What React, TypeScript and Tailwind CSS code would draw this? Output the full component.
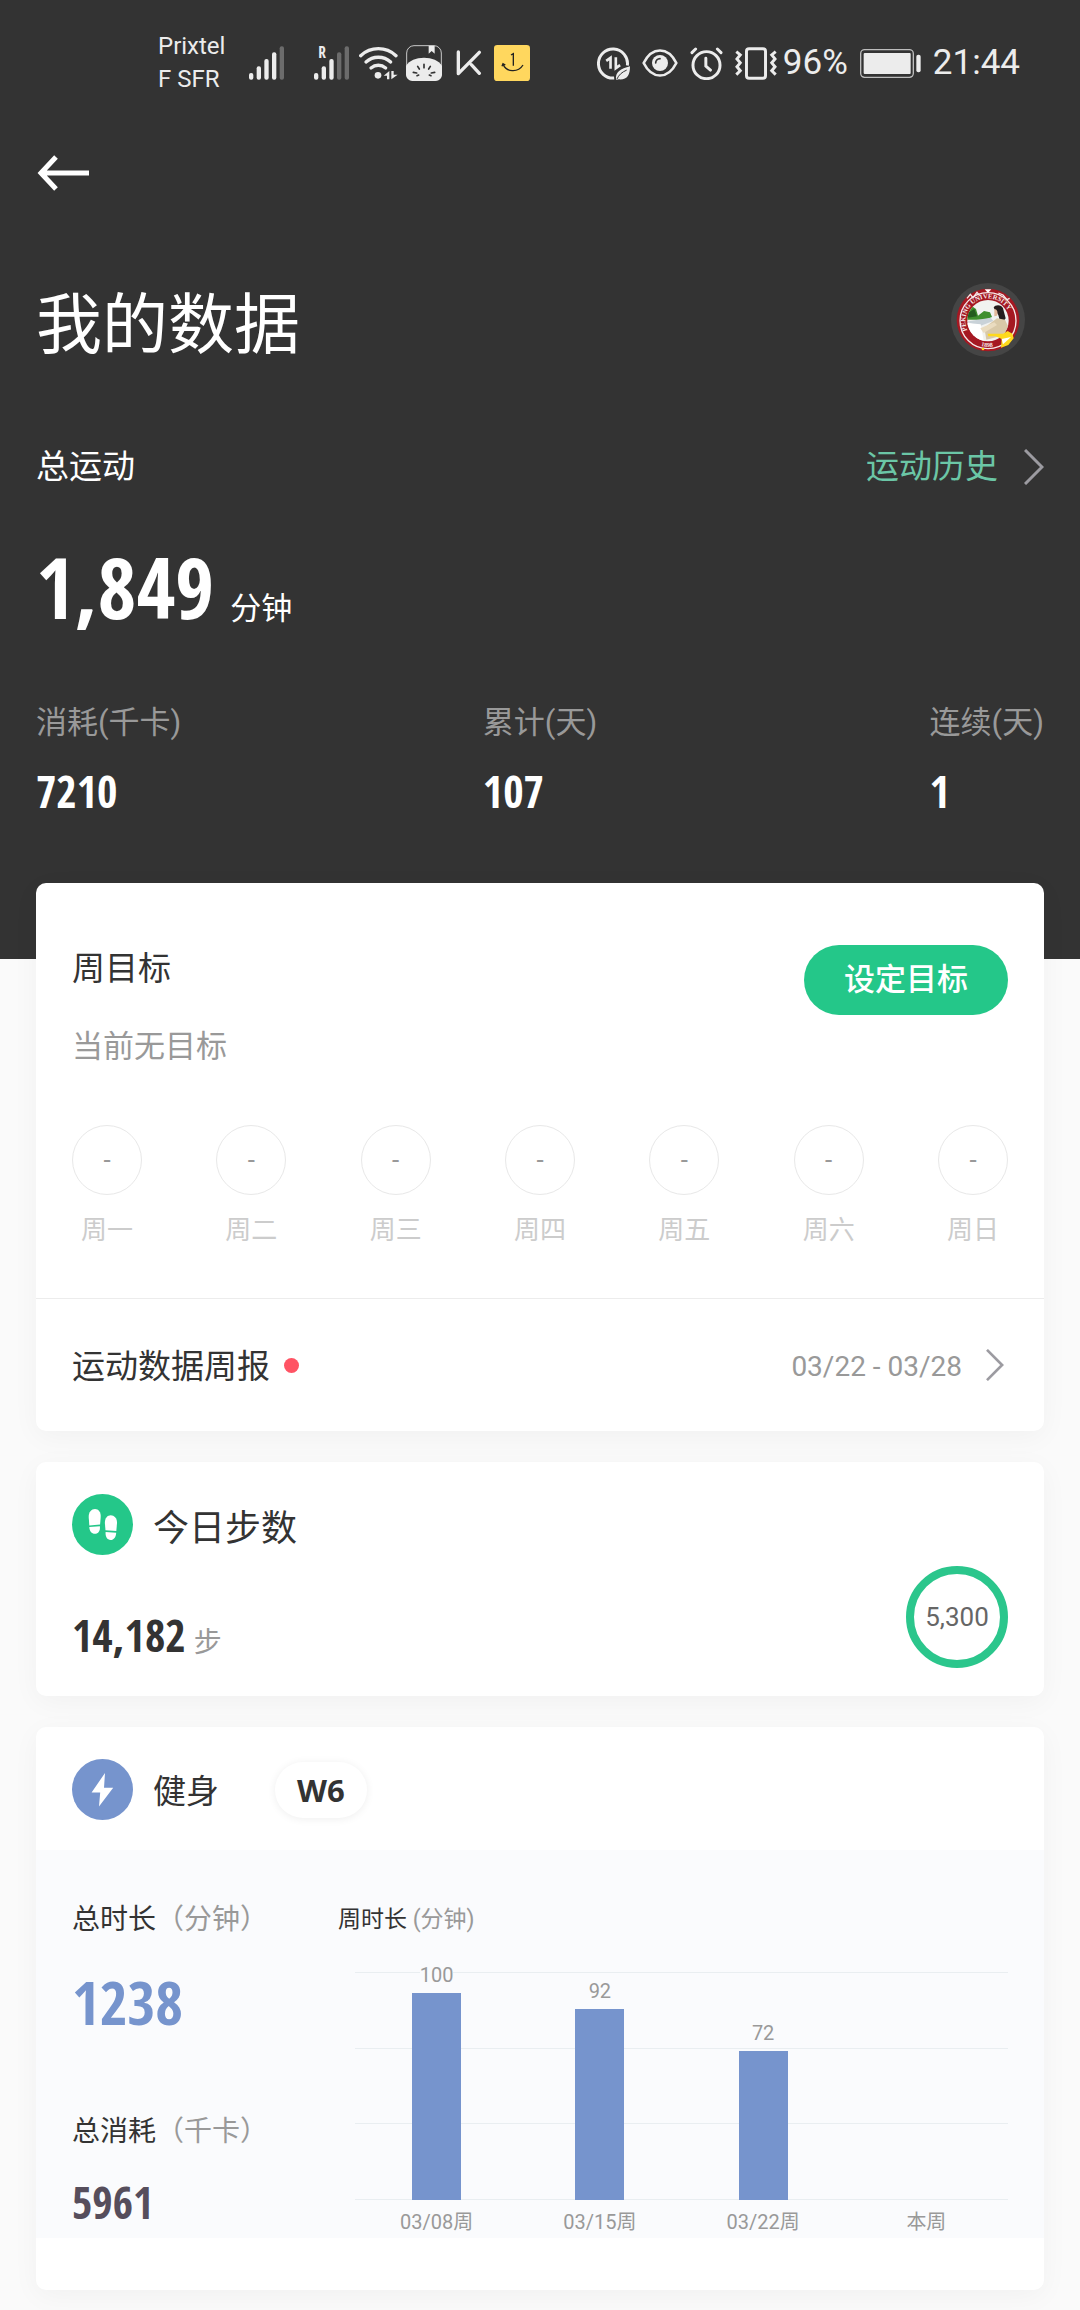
import type { ReactNode } from "react";

const WEEK_DAYS = ["周一", "周二", "周三", "周四", "周五", "周六", "周日"];

const TOTALS = [
  { label: "消耗(千卡)", value: "7210", className: "flex flex-1 flex-col items-start" },
  { label: "累计(天)", value: "107", className: "" },
  { label: "连续(天)", value: "1", className: "flex flex-1 flex-col items-end" },
];

const WEEKLY_MINUTES = [
  { label: "03/08周", minutes: 100 },
  { label: "03/15周", minutes: 92 },
  { label: "03/22周", minutes: 72 },
  { label: "本周", minutes: 0 },
];

const AXIS_MAX = 110;

function SignalIcon({ level, roaming = false }: { level: number; roaming?: boolean }) {
  const tops = [80, 60, 38, 18, 0];
  return (
    <svg width="35" height="34" viewBox="0 0 105 100" className="overflow-visible" aria-hidden="true">
      {tops.map((top, i) => (
        <rect
          key={top}
          x={i * 23}
          y={top}
          width="13"
          height={100 - top}
          rx="6"
          fill={i < level ? "#ececec" : "#6c6c6c"}
        />
      ))}
      {roaming && (
        <text x="13" y="36" fontSize="46" fontWeight="700" fontFamily="Open Sans Condensed, Roboto Condensed, sans-serif" fill="#ececec">
          R
        </text>
      )}
    </svg>
  );
}

function WifiIcon() {
  return (
    <svg width="39" height="34" viewBox="0 0 117 100" fill="none" stroke="#ececec" strokeLinecap="round" aria-hidden="true">
      <path d="M5 28C35 0 81 0 111 28" strokeWidth="10" />
      <path d="M21 47C42 28 74 28 95 47" strokeWidth="10" />
      <path d="M36 65C49 54 67 54 80 65" strokeWidth="10" />
      <circle cx="57" cy="87" r="10" fill="#ececec" stroke="none" />
      <path d="M91 74v25h-7V88H74zM97 99V74h7v11h12z" fill="#ececec" stroke="none" />
    </svg>
  );
}

function MelonIcon() {
  return (
    <svg width="36" height="36" viewBox="0 0 108 108" fill="none" aria-hidden="true">
      <rect x="2" y="2" width="104" height="104" rx="22" stroke="#c8c8c8" strokeWidth="3" />
      <path d="M0 62C10 46 30 38 54 38s44 8 54 24v26c0 12-8 20-20 20H20C8 108 0 100 0 88z" fill="#ececec" />
      <path d="M68 2h18v24l-9-8-9 8z" fill="#ececec" />
      <path
        d="M54 58v10M35 64l5 8M73 64l-5 8M22 82l10 2M86 82l-10 2M38 90l-5 2M70 90l5 2"
        stroke="#333"
        strokeWidth="5"
        strokeLinecap="round"
      />
    </svg>
  );
}

function KeepIcon() {
  return (
    <svg width="26" height="26" viewBox="0 0 78 78" fill="none" stroke="#ececec" strokeWidth="10" strokeLinecap="round" aria-hidden="true">
      <path d="M7 6v65L70 7M46 44l24 26" strokeLinejoin="round" />
    </svg>
  );
}

function AnchorAppIcon() {
  return (
    <svg width="36" height="36" viewBox="0 0 108 108" fill="none" stroke="#222" strokeWidth="4" aria-hidden="true">
      <rect width="108" height="108" rx="10" fill="#ffd75e" stroke="none" />
      <path d="M51 30l7-4v36M27 57C36 82 72 84 87 60M24 64l3-8 7 4" />
    </svg>
  );
}

function DataSaverIcon() {
  return (
    <svg width="33" height="33" viewBox="0 0 100 100" fill="none" stroke="#ececec" aria-hidden="true">
      <path d="M92 56A44 44 0 1 0 52 94" strokeWidth="9" />
      <path d="M28 42l13-9v33M57 31v33l13-9" strokeWidth="8" />
      <path d="M58 100c-4-26 14-34 42-42 0 26-8 42-34 40z" fill="#ececec" stroke="none" />
      <path d="M60 98C66 84 76 76 90 70" stroke="#333" strokeWidth="3" />
    </svg>
  );
}

function EyeIcon() {
  return (
    <svg width="36" height="28" viewBox="0 0 108 84" fill="none" aria-hidden="true">
      <path d="M5 42C30-8 78-8 103 42C78 92 30 92 5 42Z" stroke="#ececec" strokeWidth="8" strokeLinejoin="round" />
      <circle cx="54" cy="42" r="24" fill="#ececec" />
      <path d="M41 42a13 13 0 0 1 13-13" stroke="#333" strokeWidth="5" strokeLinecap="round" />
    </svg>
  );
}

function AlarmIcon() {
  return (
    <svg width="33" height="33" viewBox="0 0 100 100" fill="none" stroke="#ececec" strokeWidth="9" strokeLinecap="round" aria-hidden="true">
      <circle cx="50" cy="55" r="41" />
      <path d="M48 34v24l14 12M6 17L17 6M94 17L83 6" />
    </svg>
  );
}

function VibrateIcon() {
  return (
    <svg width="42" height="33" viewBox="0 0 128 100" fill="none" stroke="#ececec" strokeWidth="9" aria-hidden="true">
      <rect x="35" y="5" width="58" height="90" rx="8" />
      <path d="M4 14l12 10-10 12 10 12-10 12 10 12-12 12" strokeWidth="9" />
      <path d="M124 14l-12 10 10 12-10 12 10 12-10 12 12 12" strokeWidth="9" />
    </svg>
  );
}

function BatteryIcon() {
  return (
    <svg width="61" height="29" viewBox="0 0 183 87" fill="none" aria-hidden="true">
      <rect x="2" y="2" width="158" height="83" rx="12" stroke="#bdbdbd" strokeWidth="4" />
      <rect x="11" y="12" width="141" height="63" rx="3" fill="#ececec" />
      <rect x="169" y="17" width="13" height="53" rx="6" fill="#ececec" />
    </svg>
  );
}

function StatusBar() {
  return (
    <div className="flex h-[124px] items-center justify-between pt-0.5 pl-[158px] pr-15 text-[#ececec]">
      <div className="flex items-center">
        <p className="text-2xl leading-[33px]">
          Prixtel
          <br />F SFR
        </p>
        <div className="ml-6 flex items-center gap-[30px]">
          <SignalIcon level={4} />
          <SignalIcon level={3} roaming />
        </div>
        <div className="ml-2.5 flex items-center gap-2">
          <WifiIcon />
          <MelonIcon />
        </div>
        <div className="ml-3.5 flex items-center gap-3">
          <KeepIcon />
          <AnchorAppIcon />
        </div>
      </div>
      <div className="flex items-center gap-3">
        <DataSaverIcon />
        <EyeIcon />
        <AlarmIcon />
        <div className="flex items-center gap-1.5">
          <VibrateIcon />
          <span className="text-[35px] leading-10">96%</span>
        </div>
        <BatteryIcon />
        <span className="text-[35px] leading-10">21:44</span>
      </div>
    </div>
  );
}

function Avatar() {
  return (
    <svg width="74" height="74" viewBox="0 0 222 222" role="img" aria-label="头像">
      <defs>
        <path id="ring-top" d="M49 142A68 68 0 1 1 173 142" />
        <path id="ring-bottom" d="M66 178A80 80 0 0 0 156 178" />
        <clipPath id="photo">
          <circle cx="111" cy="113" r="62" />
        </clipPath>
      </defs>
      <circle cx="111" cy="111" r="111" fill="#454545" />
      <circle cx="111" cy="111" r="94" fill="#a51822" />
      <path d="M48 46l10-12 8 10 12-16 8 10M142 30l14 6 12 14 8-4" fill="none" stroke="#f3e5e5" strokeWidth="4" />
      <path d="M101 19h20l-10 11z" fill="#fff" />
      <circle cx="111" cy="113" r="84" fill="none" stroke="#f6eaea" strokeWidth="4" />
      <g clipPath="url(#photo)">
        <rect x="45" y="45" width="132" height="132" fill="#f1f2f0" />
        <path d="M45 78l16-10 14 10 6 20 18-14 18 4 6 14-20 8H45z" fill="#3f8f2e" />
        <path d="M50 90l20-12 8 22-28 4z" fill="#245c1f" />
        <path d="M45 116l74-12 8 10-42 16z" fill="#c9d2d8" />
        <path d="M45 120l44 4 10 54H45z" fill="#fff" />
        <path d="M128 74c4-10 24-10 28 2l8 30-14 20-8-30z" fill="#251c1d" />
        <path d="M130 78c8 0 12 10 8 20l-8 2z" fill="#e2b89a" />
        <path d="M100 134l38-28 24 4 14 30-30 20-40 10z" fill="#d9c9a8" />
        <path d="M88 136l42-18 8 8-40 24z" fill="#eadcc0" />
      </g>
      <text fontSize="20" fontFamily="Liberation Serif, serif" fontWeight="700" fill="#f6eaea">
        <textPath href="#ring-top">PEKING UNIVERSITY</textPath>
      </text>
      <text fontSize="18" fontFamily="Liberation Serif, serif" fontWeight="700" fill="#f6eaea">
        <textPath href="#ring-bottom" startOffset="28%">
          1898
        </textPath>
      </text>
      <path d="M110 152h46l14-8 14 8 4 14-16 20-22 8 2-26-18-8h-22z" fill="#ffd91c" />
      <path d="M152 168l28-6-24 22z" fill="#fff" />
      <circle cx="96" cy="198" r="4" fill="#ffd91c" />
    </svg>
  );
}

function Chevron({ className }: { className: string }) {
  return (
    <svg className={className} viewBox="0 0 20 36" fill="none" stroke="#9c9ba1" strokeWidth="3" aria-hidden="true">
      <path d="M1 1l17 17L1 35" />
    </svg>
  );
}

function StepsIcon() {
  return (
    <svg width="61" height="61" viewBox="0 0 61 61" aria-hidden="true">
      <circle cx="30.500" cy="30.500" r="30.500" fill="#24c789" />
      <g fill="#fff">
        <path d="M16.700 23C16.500 18 19.500 15 23 15s6 3 5.700 8l-.6 7.600-10.800.8z" />
        <path d="M17.300 33l10.600-.8c.5 4.800-1.700 7.600-5 7.600-3.400 0-5.400-2.600-5.600-6.800z" />
        <path d="M45 29.300c.2-5-2.800-8-6.200-8s-6.200 3-5.900 8l.6 7 10.800.6z" />
        <path d="M44.200 38.700l-10.600-.6c-.4 4.800 1.600 7.900 5 7.900 3.300 0 5.400-3 5.600-7.300z" />
      </g>
    </svg>
  );
}

function BoltIcon() {
  return (
    <svg width="61" height="61" viewBox="0 0 61 61" aria-hidden="true">
      <circle cx="30.500" cy="30.500" r="30.500" fill="#7694cd" />
      <path d="M33 14L19.600 33.400h8.600L27 47.500l14.200-18.800H32z" fill="#fff" />
    </svg>
  );
}

function Card({ className = "", children }: { className?: string; children: ReactNode }) {
  return (
    <section className={`overflow-hidden rounded-[10px] bg-white shadow-[0_6px_28px_rgba(0,0,0,0.04)] ${className}`}>
      {children}
    </section>
  );
}

function Header() {
  return (
    <header className="bg-[#333] pb-[142px] text-white">
      <StatusBar />
      <div className="px-9">
        <button type="button" aria-label="返回" className="block py-[31px]">
          <svg width="54" height="36" viewBox="0 0 54 36" fill="none" stroke="#fff" strokeWidth="5" aria-hidden="true">
            <path d="M20 2L5 18l15 16M5 18h48" />
          </svg>
        </button>
        <div className="mt-[61px] flex items-start justify-between pr-[19px]">
          <h1 className="text-[66px] leading-[86px]">我的数据</h1>
          <Avatar />
        </div>
        <div className="mt-[78px] flex items-center justify-between">
          <h2 className="text-[33px] leading-10">总运动</h2>
          <a href="#history" className="flex items-center gap-[26px] text-[33px] leading-10 text-[#6bc6a6]">
            运动历史
            <Chevron className="h-9 w-5" />
          </a>
        </div>
        <p className="mt-12 flex items-baseline gap-4">
          <strong className="font-['Open_Sans_Condensed','Roboto_Condensed',sans-serif] text-[84px] leading-[104px] font-bold">1,849</strong>
          <span className="text-[31px]">分钟</span>
        </p>
        <dl className="mt-[66px] flex">
          {TOTALS.map(({ label, value, className }) => (
            <div key={label} className={className}>
              <div>
                <dt className="text-[31px] leading-9 text-[#999]">{label}</dt>
                <dd className="mt-6 font-['Open_Sans_Condensed','Roboto_Condensed',sans-serif] text-[44px] leading-[52px] font-bold">{value}</dd>
              </div>
            </div>
          ))}
        </dl>
      </div>
    </header>
  );
}

function WeeklyGoalCard() {
  return (
    <Card>
      <div className="px-9 pt-15 pb-13">
        <div className="flex items-start justify-between">
          <div>
            <h2 className="pt-2 text-[33px] leading-9">周目标</h2>
            <p className="mt-[42px] text-[31px] leading-9 text-[#999]">当前无目标</p>
          </div>
          <button type="button" className="mt-0.5 rounded-full bg-[#24c789] px-10 text-[31px] leading-[70px] font-medium text-white">
            设定目标
          </button>
        </div>
        <ul className="mt-15 flex justify-between">
          {WEEK_DAYS.map((day) => (
            <li key={day} className="flex flex-col items-center gap-[19px]">
              <span className="flex size-[70px] items-center justify-center rounded-full border border-[#e8e8e8] text-[26px] text-[#999]">-</span>
              <span className="text-[26px] leading-8 text-[#ccc]">{day}</span>
            </li>
          ))}
        </ul>
      </div>
      <a href="#report" className="flex items-center border-t border-[#ececec] px-9 pt-[50px] pb-[46px] text-[33px] leading-9">
        运动数据周报
        <i className="mb-1 ml-3.5 size-[15px] rounded-full bg-[#ff5364]" />
        <span className="ml-auto text-[28px] text-[#999]">03/22 - 03/28</span>
        <Chevron className="mr-1 mb-1 ml-6 h-8 w-[18px]" />
      </a>
    </Card>
  );
}

function StepsCard() {
  return (
    <Card className="flex items-end justify-between px-9 pt-8 pb-7">
      <div>
        <h2 className="flex items-center gap-5 text-[36px]">
          <StepsIcon />
          <span className="pt-2 leading-[50px]">今日步数</span>
        </h2>
        <p className="mt-[50px] flex items-baseline gap-2 pb-[3px]">
          <strong className="font-['Open_Sans_Condensed','Roboto_Condensed',sans-serif] text-[44px] leading-15 font-bold">14,182</strong>
          <span className="text-[28px] text-[#999]">步</span>
        </p>
      </div>
      <div className="flex size-[102px] items-center justify-center rounded-full border-8 border-[#2bc68c] text-[26px] text-[#666]">5,300</div>
    </Card>
  );
}

function MinutesChart() {
  return (
    <div className="flex-1">
      <h3 className="text-[23px] leading-8">
        周时长 <span className="text-[#999]">(分钟)</span>
      </h3>
      <div className="relative mt-9 ml-[17px] h-[228px]">
        <div className="absolute inset-0 flex flex-col justify-between">
          {[3, 2, 1, 0].map((line) => (
            <i key={line} className="h-px bg-[#e9eef1]" />
          ))}
        </div>
        <ul className="relative flex h-full items-end">
          {WEEKLY_MINUTES.map(({ label, minutes }) => (
            <li key={label} className="flex h-full flex-1 flex-col items-center justify-end text-xl leading-6 text-[#999]">
              {minutes > 0 && <span className="mb-1.5 bg-[#fafbfd]">{minutes}</span>}
              <i className="w-[49px] shrink-0 bg-[#7694cd]" style={{ height: `${(minutes / AXIS_MAX) * 100}%` }} />
            </li>
          ))}
        </ul>
      </div>
      <div className="mt-2.5 ml-[17px] flex text-xl leading-6 text-[#999]">
        {WEEKLY_MINUTES.map(({ label }) => (
          <span key={label} className="flex-1 text-center">
            {label}
          </span>
        ))}
      </div>
    </div>
  );
}

function WorkoutCard() {
  return (
    <Card className="pb-13">
      <div className="flex items-center px-9 pt-8 pb-[30px]">
        <BoltIcon />
        <h2 className="ml-5 pt-1 text-[33px] leading-[57px]">健身</h2>
        <span className="ml-14 rounded-full px-[22px] font-['Open_Sans','Noto_Sans',sans-serif] text-[31px] leading-14 font-bold shadow-[0_1px_8px_rgba(0,0,0,0.07)]">
          W6
        </span>
      </div>
      <div className="flex bg-[#fafbfd] px-9 pt-[54px] pb-1">
        <div className="w-[266px]">
          <h3 className="text-[28px] leading-8">
            总时长<span className="text-[#999]">（分钟）</span>
          </h3>
          <p className="mt-8 font-['Open_Sans_Condensed','Roboto_Condensed',sans-serif] text-[60px] leading-[68px] font-bold text-[#7694cd]">1238</p>
          <h3 className="mt-20 text-[28px] leading-8">
            总消耗<span className="text-[#999]">（千卡）</span>
          </h3>
          <p className="mt-7 font-['Open_Sans_Condensed','Roboto_Condensed',sans-serif] text-[44px] leading-[52px] font-bold text-[#564e5c]">5961</p>
        </div>
        <MinutesChart />
      </div>
    </Card>
  );
}

export default function App() {
  return (
    <div className="min-h-screen bg-[#fafafa] font-['Roboto','Noto_Sans_CJK_SC',sans-serif] text-[#333]">
      <Header />
      <main className="relative -mt-[76px] flex flex-col gap-[31px] px-9 pb-5">
        <WeeklyGoalCard />
        <StepsCard />
        <WorkoutCard />
      </main>
    </div>
  );
}
